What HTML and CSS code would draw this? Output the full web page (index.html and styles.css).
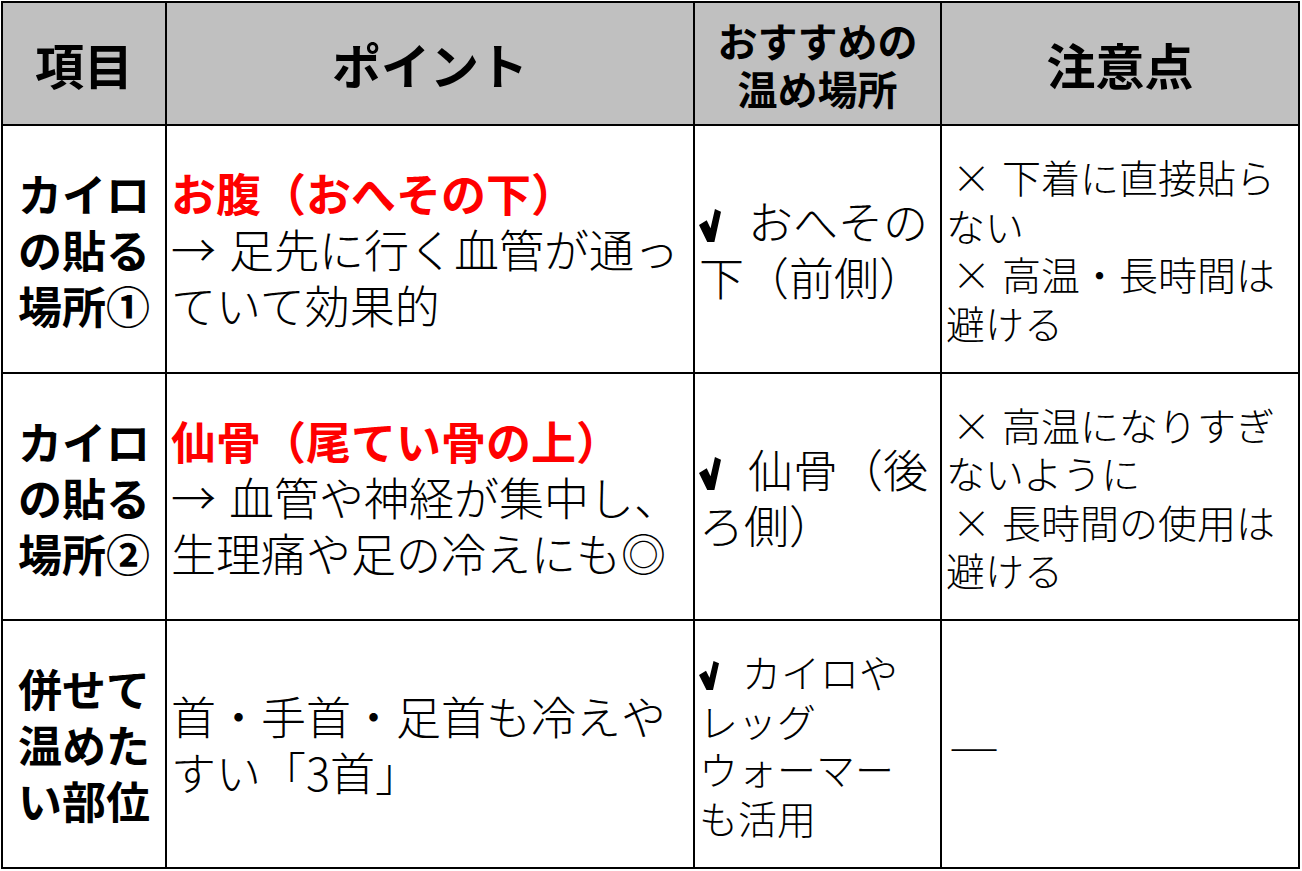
FILE: index.html
```html
<!DOCTYPE html>
<html lang="ja">
<head>
<meta charset="utf-8">
<title>カイロの貼る場所</title>
<link rel="stylesheet" href="styles.css">
</head>
<body>
<div class="sheet">
  <div class="cell head"><div class="txt">項目</div></div>
  <div class="cell head"><div class="txt">ポイント</div></div>
  <div class="cell head"><div class="txt small">おすすめの<br>温め場所</div></div>
  <div class="cell head"><div class="txt">注意点</div></div>

  <div class="cell item"><div class="txt">カイロ<br>の貼る<br>場所①</div></div>
  <div class="cell body"><div class="txt"><span class="red">お腹（おへその下）</span><br><span class="arrow">→</span>足先に行く血管が通っ<br>ていて効果的</div></div>
  <div class="cell body"><div class="txt"><svg class="check" width="22" height="33" viewBox="0 0 20 31" preserveAspectRatio="none"><path d="M0 15 L7 10.5 L10.5 18 L14.5 0 L20 2.5 L14 31 L7.5 31 Z"/></svg>おへその<br>下（前側）</div></div>
  <div class="cell body"><div class="txt note"><span class="x">×</span>下着に直接貼ら<br>ない<br><span class="x">×</span>高温・長時間は<br>避ける</div></div>

  <div class="cell item"><div class="txt">カイロ<br>の貼る<br>場所②</div></div>
  <div class="cell body"><div class="txt"><span class="red">仙骨（尾てい骨の上）</span><br><span class="arrow">→</span>血管や神経が集中し、<br>生理痛や足の冷えにも◎</div></div>
  <div class="cell body"><div class="txt"><svg class="check" width="22" height="33" viewBox="0 0 20 31" preserveAspectRatio="none"><path d="M0 15 L7 10.5 L10.5 18 L14.5 0 L20 2.5 L14 31 L7.5 31 Z"/></svg>仙骨（後<br>ろ側）</div></div>
  <div class="cell body"><div class="txt note"><span class="x">×</span>高温になりすぎ<br>ないように<br><span class="x">×</span>長時間の使用は<br>避ける</div></div>

  <div class="cell item"><div class="txt">併せて<br>温めた<br>い部位</div></div>
  <div class="cell body"><div class="txt">首・手首・足首も冷えや<br>すい「3首」</div></div>
  <div class="cell body"><div class="txt note"><svg class="check sm" width="20" height="29" viewBox="0 0 20 31" preserveAspectRatio="none"><path d="M0 15 L7 10.5 L10.5 18 L14.5 0 L20 2.5 L14 31 L7.5 31 Z"/></svg>カイロや<br>レッグ<br>ウォーマー<br>も活用</div></div>
  <div class="cell body"><div class="txt note"><span class="dash">—</span></div></div>
</div>
</body>
</html>
```
FILE: styles.css
```css
html, body {
  margin: 0;
  padding: 0;
  background: #ffffff;
}
body {
  font-family: "Noto Sans CJK JP", "Noto Sans", sans-serif;
  color: #000;
}
.sheet {
  margin: 1px 0 0 1px;
  display: grid;
  grid-template-columns: 164px 528px 247px 358px;
  grid-template-rows: 123px 248px 247px 248px;
  border-left: 2px solid #000;
  border-top: 2px solid #000;
  width: max-content;
}
.cell {
  box-sizing: border-box;
  border-right: 2px solid #000;
  border-bottom: 2px solid #000;
  display: flex;
  align-items: center;
  overflow: hidden;
}
.txt {
  white-space: nowrap;
}
.head {
  background: #c0c0c0;
  justify-content: center;
  text-align: center;
}
.head .txt {
  font-weight: 700;
  font-size: 49px;
  line-height: 56px;
}
.head .txt.small {
  font-size: 40px;
  line-height: 48px;
}
.item {
  justify-content: center;
  text-align: center;
}
.item .txt {
  font-weight: 700;
  font-size: 44px;
  line-height: 56px;
}
.body {
  justify-content: flex-start;
  padding-left: 4px;
}
.body .txt {
  font-weight: 300;
  font-size: 45px;
  line-height: 56px;
}
.body .txt.note {
  font-size: 39px;
  line-height: 48.5px;
}
.red {
  color: #ff0000;
  font-weight: 700;
}
.arrow {
  display: inline-block;
  width: 58px;
}
.x {
  display: inline-block;
  width: 56px;
  padding-left: 6px;
  box-sizing: border-box;
}
.check {
  display: inline-block;
  width: 22px;
  height: 33px;
  fill: #000;
  vertical-align: -2px;
  margin-left: 0;
  margin-right: 27px;
}
.check.sm {
  width: 20px;
  height: 29px;
  margin-right: 23px;
}
.dash {
  display: inline-block;
  transform: scaleX(1.45);
  transform-origin: left center;
  margin-left: 3px;
}
```
